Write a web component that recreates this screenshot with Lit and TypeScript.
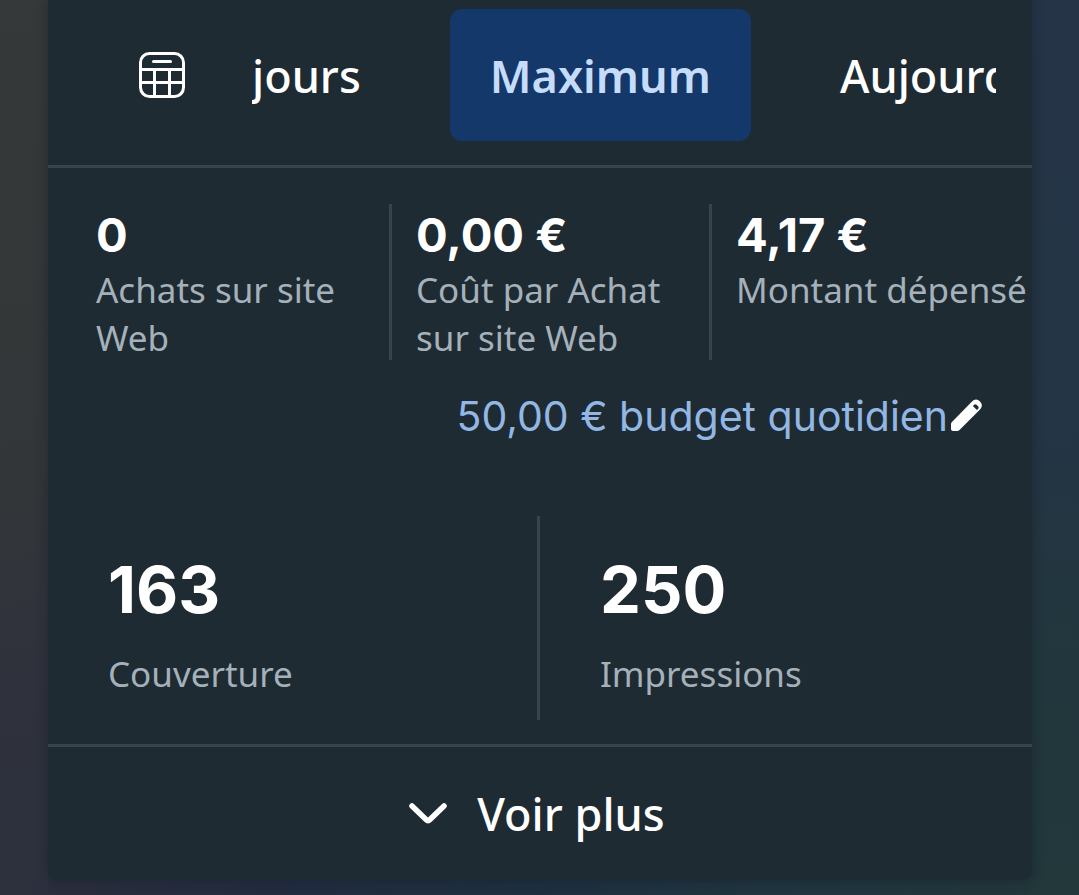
import { LitElement, html, css } from "lit";
import { customElement, state } from "lit/decorators.js";

@customElement("app-root")
export class AppRoot extends LitElement {
  @state() private period = "Maximum";

  private periods = ["jours", "Maximum", "Aujourd’hui"];

  private results = [
    { value: "0", label: "Achats sur site Web" },
    { value: "0,00 €", label: "Coût par Achat sur site Web" },
    { value: "4,17 €", label: "Montant dépensé" },
  ];

  private reach = [
    { value: "163", label: "Couverture" },
    { value: "250", label: "Impressions" },
  ];

  static styles = css`
    :host {
      display: block;
      min-height: 100vh;
      box-sizing: border-box;
      padding: 0 47px 16px 48px;
      overflow: hidden;
      font-family: "Noto Sans", "Open Sans", sans-serif;
      color: #ffffff;
      background:
        linear-gradient(to right, #2b2e3c 0, #222c40 25%, #1e3040 50%, #20353f 75%, #22373b 100%) bottom / calc(100% - 96px) 40px no-repeat,
        linear-gradient(to bottom, #253547 0, #243546 45%, #22373d 75%, #22383b 100%) right / 50% 100% no-repeat,
        linear-gradient(172deg, #353939 0, #333638 45%, #2f323c 65%, #2b3040 100%);
    }
    button {
      font: inherit;
      color: inherit;
      background: none;
      border: 0;
      margin: 0;
      padding: 0;
      cursor: pointer;
    }
    svg {
      display: block;
      flex: none;
    }
    .card {
      background: #1f2b33;
      border-radius: 0 0 10px 10px;
      box-shadow: 0 0 12px rgba(20, 28, 38, 0.5);
    }
    .periods {
      display: flex;
      align-items: center;
      padding: 9px 36px 24px 90px;
      border-bottom: 3px solid #38444c;
    }
    .calendar {
      margin-right: 66px;
    }
    .tabs {
      flex: 1;
      min-width: 0;
      display: flex;
      gap: 49px;
      overflow: hidden;
    }
    .tab {
      flex: none;
      height: 132px;
      padding: 0 40px;
      border-radius: 12px;
      font-size: 45px;
      font-weight: 500;
      white-space: nowrap;
    }
    .tab:first-child {
      padding-left: 0;
    }
    .tab.active {
      background: #15386b;
      color: #c5dcfa;
      font-weight: 600;
    }
    .results {
      display: grid;
      grid-template-columns: repeat(3, 1fr);
      margin: 0;
      padding: 36px 0 0 24px;
    }
    .result {
      height: 156px;
      padding-left: 24px;
      border-right: 3px solid #38444c;
    }
    .result:last-child {
      border-right: 0;
    }
    dt,
    dd {
      margin: 0;
    }
    .result,
    .metric {
      display: flex;
      flex-direction: column-reverse;
      justify-content: flex-end;
    }
    .value {
      font-family: Inter, "Noto Sans", sans-serif;
      font-size: 47px;
      line-height: 62px;
      font-weight: 700;
    }
    .label {
      font-size: 35px;
      line-height: 48px;
      color: #a5b1ba;
    }
    .budget {
      display: flex;
      justify-content: flex-end;
      align-items: center;
      margin: 28px 48px 0 auto;
      font-family: Inter, "Noto Sans", sans-serif;
      font-size: 41px;
      line-height: 56px;
      color: #92b7e4;
    }
    .reach {
      display: grid;
      grid-template-columns: repeat(2, 1fr);
      margin: 72px 0 24px;
    }
    .metric {
      box-sizing: border-box;
      height: 204px;
      padding: 28px 0 0 60px;
      border-right: 3px solid #38444c;
    }
    .metric:last-child {
      border-right: 0;
    }
    .metric .value {
      font-size: 65px;
      line-height: 92px;
    }
    .metric .label {
      padding-top: 14px;
    }
    .more {
      display: flex;
      align-items: center;
      justify-content: center;
      gap: 30px;
      width: 100%;
      height: 136px;
      padding-right: 6px;
      border-top: 3px solid #38444c;
      font-size: 45px;
      font-weight: 500;
    }
  `;

  render() {
    return html`
      <main class="card">
        <div class="periods">
          <button class="calendar" aria-label="Choisir les dates">
            <svg width="48" height="48" viewBox="0 0 48 48" fill="none" stroke="#ffffff" stroke-width="3">
              <rect x="2.500" y="2.500" width="43" height="43" rx="9" />
              <path d="M15.500 10.500H32.500" stroke-linecap="round" />
              <path d="M2.500 18.500H45.500M2.500 31.500H45.500M16.500 18.500V45.500M31.500 18.500V45.500" />
            </svg>
          </button>
          <div class="tabs">
            ${this.periods.map(
              (name) => html`<button
                class="tab ${name === this.period ? "active" : ""}"
                aria-pressed=${name === this.period}
                @click=${() => (this.period = name)}
              >${name}</button>`
            )}
          </div>
        </div>
        <dl class="results">
          ${this.results.map(
            (r) => html`<div class="result">
              <dt class="label">${r.label}</dt>
              <dd class="value">${r.value}</dd>
            </div>`
          )}
        </dl>
        <button class="budget">
          50,00 € budget quotidien
          <svg width="36" height="36" viewBox="0 0 36 36">
            <path
              fill="#ffffff"
              fill-rule="evenodd"
              d="M3.500 24.500L23.500 4Q28 -0.500 32 3.500Q36 7.500 31.500 12L12 31.500Q10.500 33 9 33H5Q3 33 3 31V26.500Q3 25 3.500 24.500ZM25.800 7L25 8.200L29 12L30.300 10.800Q31 9.500 30.300 8.500L28.500 6.800Q27 5.800 25.800 7Z"
            />
          </svg>
        </button>
        <dl class="reach">
          ${this.reach.map(
            (m) => html`<div class="metric">
              <dt class="label">${m.label}</dt>
              <dd class="value">${m.value}</dd>
            </div>`
          )}
        </dl>
        <button class="more">
          <svg width="38" height="24" viewBox="0 0 38 24" fill="none" stroke="#ffffff" stroke-width="5.500">
            <path d="M3 4L17 17.500Q19 19.500 21 17.500L35 4" stroke-linecap="round" stroke-linejoin="round" />
          </svg>
          <span>Voir plus</span>
        </button>
      </main>
    `;
  }
}
